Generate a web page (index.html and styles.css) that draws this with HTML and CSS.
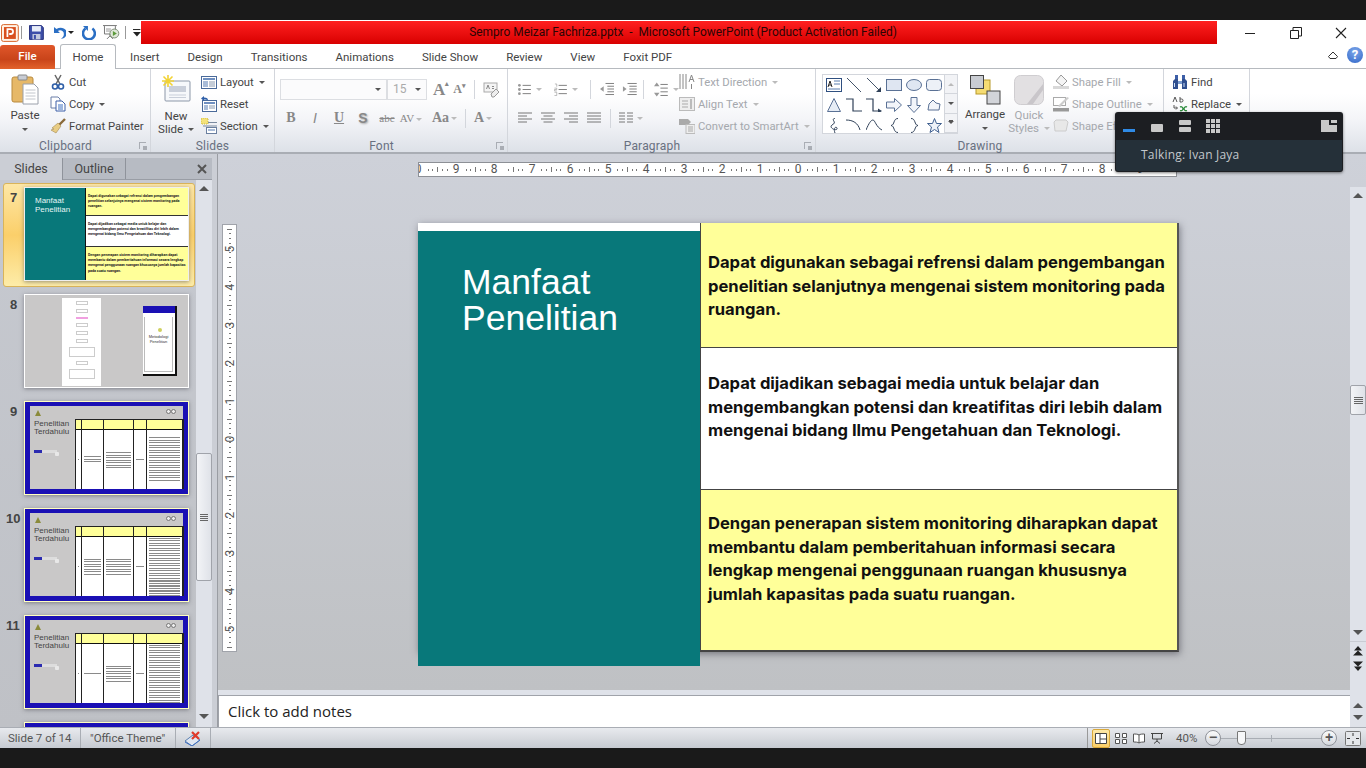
FILE: index.html
```html
<!DOCTYPE html>
<html lang="id">
<head>
  <meta charset="UTF-8">
  <title>Sempro Meizar Fachriza.pptx - Microsoft PowerPoint</title>
  <link rel="stylesheet" href="styles.css">
</head>
<body>
<div class="screen">
  <div class="black-top"></div>

  <!-- title bar -->
  <div class="titlebar">
    <div class="qat">
      <svg class="q-logo" width="18" height="18" viewBox="0 0 18 18"><rect x=".5" y=".5" width="17" height="17" rx="2" fill="#fff3e6" stroke="#d9652b"/><rect x="3" y="3" width="12" height="12" fill="#d9501e"/><path d="M6.5 13V5h3.2a2.4 2.4 0 0 1 0 5H8.3" fill="none" stroke="#fff" stroke-width="1.8"/></svg>
      <span class="q-sep q1"></span>
      <svg class="q-save" width="15" height="15" viewBox="0 0 15 15"><path d="M.5.5h12l2 2v12H.5z" fill="#3d4fa8" stroke="#2a3580"/><rect x="3" y="1" width="9" height="5.500" fill="#e8edf8"/><rect x="3.500" y="9" width="8" height="5.500" fill="#c3c9dc"/><rect x="5" y="10" width="2" height="4" fill="#3d4fa8"/></svg>
      <svg class="q-undo" width="14" height="14" viewBox="0 0 14 14"><path d="M1 1v6h6L5 5c2-1.500 6-.5 6 3 0 2-1 3.500-3 5 4-.5 6-3 6-6C14 2.500 8 0 3.500 3z" fill="#2b6fc4"/></svg>
      <span class="caret dark q-c1"></span>
      <svg class="q-redo" width="14" height="14" viewBox="0 0 14 14"><path d="M3.500 2.500A6 6 0 1 0 10.500 2.500" fill="none" stroke="#2b6fc4" stroke-width="2.600"/><path d="M1 0h5v5z" fill="#2b6fc4"/></svg>
      <svg class="q-show" width="17" height="15" viewBox="0 0 17 15"><path d="M0 .5h14M1.500 1v8h11V1M7 9v2M4 14l3-3 3 3" fill="none" stroke="#777"/><path d="M3 4h5M3 6h5" stroke="#999"/><circle cx="11.500" cy="8.500" r="4.500" fill="#dfe8d8" stroke="#7f8f78"/><path d="M10 6v5l4-2.500z" fill="#5b9a3a"/></svg>
      <span class="q-sep q2"></span>
      <svg class="q-more" width="8" height="8" viewBox="0 0 8 8"><path d="M0 .5h7.500" stroke="#222"/><path d="M0 3h8L4 7.500z" fill="#222"/></svg>
    </div>
    <div class="title-red">Sempro Meizar Fachriza.pptx&nbsp; -&nbsp; Microsoft PowerPoint (Product Activation Failed)</div>
    <div class="winbtns">
      <svg width="12" height="12" viewBox="0 0 12 12"><path d="M1 6.500h10" stroke="#222"/></svg>
      <svg width="12" height="12" viewBox="0 0 12 12"><path d="M.5 3.500h8v8h-8zM3 3.500V.5h8.500V9H8.500" fill="none" stroke="#222"/></svg>
      <svg width="12" height="12" viewBox="0 0 12 12"><path d="M1 1l10 10M11 1L1 11" stroke="#222" stroke-width="1.100"/></svg>
    </div>
  </div>

  <!-- tabs -->
  <div class="tabs">
    <div class="tab-file">File</div>
    <div class="tab-home">Home</div>
    <div class="tab">Insert</div>
    <div class="tab">Design</div>
    <div class="tab">Transitions</div>
    <div class="tab">Animations</div>
    <div class="tab">Slide Show</div>
    <div class="tab">Review</div>
    <div class="tab">View</div>
    <div class="tab">Foxit PDF</div>
    <div class="tabs-right">
      <svg width="10" height="8" viewBox="0 0 10 8"><path d="M.5 5.500L5 1l4.500 4.500-1.500 2H2z" fill="none" stroke="#333"/></svg>
      <div class="help">?</div>
    </div>
  </div>

  <!-- ribbon -->
  <div class="ribbon">
    <div class="group g-clip">
      <div class="g-body">
        <div class="big-btn paste">
          <svg width="28" height="31" viewBox="0 0 28 31"><rect x="1" y="3" width="21" height="25" rx="2" fill="#e6b868" stroke="#b98a3e"/><rect x="7" y="1" width="9" height="5" rx="1" fill="#c8ccd4" stroke="#888"/><path d="M12 10h11l4 4v16H12z" fill="#fff" stroke="#9aa0aa"/><path d="M14.500 16h10M14.500 19h10M14.500 22h10M14.500 25h10" stroke="#c2c6cc"/></svg>
          <span class="big-label">Paste</span>
          <span class="caret"></span>
        </div>
        <div class="stack">
          <div class="row"><svg class="ic" width="16" height="16" viewBox="0 0 16 16"><path d="M5 1l5 9M11 1L6 10" stroke="#666" stroke-width="1.500"/><circle cx="5" cy="12.500" r="2.500" fill="none" stroke="#2f5fa8" stroke-width="1.600"/><circle cx="11" cy="12.500" r="2.500" fill="none" stroke="#2f5fa8" stroke-width="1.600"/></svg>Cut</div>
          <div class="row"><svg class="ic" width="16" height="16" viewBox="0 0 16 16"><path d="M1 1h7l2 2v9H1z" fill="#fff" stroke="#6b7fa8"/><path d="M6 5h6l3 3v7H6z" fill="#fff" stroke="#3d5fa8"/><path d="M8 9h5M8 11h5M8 13h5" stroke="#3d6fc0"/></svg>Copy <span class="caret"></span></div>
          <div class="row"><svg class="ic" width="16" height="16" viewBox="0 0 16 16"><path d="M15 1L8 8" stroke="#8a6a3a" stroke-width="2.400"/><path d="M8 5l3 3-5 7-5-3 3-1-2-1z" fill="#e8cc84" stroke="#a58a50" stroke-width=".6"/></svg>Format Painter</div>
        </div>
      </div>
      <div class="g-label">Clipboard<span class="launcher"></span></div>
    </div>

    <div class="group g-slides">
      <div class="g-body">
        <div class="big-btn newslide">
          <svg width="30" height="28" viewBox="0 0 30 28"><rect x="4" y="6" width="25" height="20" rx="1" fill="#f6f8fb" stroke="#8c97a8"/><rect x="8" y="11" width="17" height="6" fill="#c9cfda"/><path d="M8 20h17M8 22.500h17" stroke="#c9cfda"/><path d="M7 0v12M1 6h12M2.500 1.500l9 9M11.500 1.500l-9 9" stroke="#f2d335" stroke-width="1.600"/></svg>
          <span class="big-label">New<br>Slide <span class="caret"></span></span>
        </div>
        <div class="stack">
          <div class="row"><svg class="ic" width="16" height="16" viewBox="0 0 16 16"><rect x=".5" y="2.500" width="15" height="12" fill="#fff" stroke="#4a6a9a"/><rect x="2" y="4" width="12" height="2" fill="#6f8fc0"/><rect x="2" y="7" width="5" height="6" fill="#a9bcd8"/><path d="M8 8h6M8 10h6M8 12h6" stroke="#8a9ab0"/></svg>Layout <span class="caret"></span></div>
          <div class="row"><svg class="ic" width="16" height="16" viewBox="0 0 16 16"><rect x="1.500" y="4.500" width="14" height="11" fill="#fff" stroke="#4a6a9a"/><rect x="3" y="6" width="11" height="2" fill="#6f8fc0"/><rect x="3" y="9" width="4" height="5" fill="#a9bcd8"/><path d="M8 10h6M8 12h6" stroke="#8a9ab0"/><path d="M0 2.500L3 0v1.500c3 0 4 1 4 3C6 3.500 5 3.500 3 3.500V5z" fill="#2f5fa8"/></svg>Reset</div>
          <div class="row"><svg class="ic" width="16" height="16" viewBox="0 0 16 16"><rect x="0" y="0" width="7" height="6" fill="#f4e27a" stroke="#c9b63e" stroke-dasharray="1 1"/><path d="M7 4.500h9M2 8h14" stroke="#7a8aa0"/><rect x="5.500" y="9.500" width="10" height="6" fill="#fff" stroke="#6a7f9f"/><rect x="7" y="11" width="7" height="2" fill="#a9bcd8"/></svg>Section <span class="caret"></span></div>
        </div>
      </div>
      <div class="g-label">Slides</div>
    </div>

    <div class="group g-font off">
      <div class="g-body col">
        <div class="f-row1">
          <div class="select s-font"><span class="caret"></span></div>
          <div class="select s-size">15<span class="caret"></span></div>
          <span class="glyph big a-grow">A<i>▴</i></span>
          <span class="glyph a-shrink">A<i>▾</i></span>
          <span class="vsep s1"></span>
          <svg class="clear" width="17" height="16" viewBox="0 0 17 16"><rect x="1" y="1" width="13" height="9" fill="#f4f4f4" stroke="#aaa"/><path d="M3.500 7L5 3l1.500 4M9 4.500h2M9 6.500h2" fill="none" stroke="#888"/><path d="M8 12l5-5 3 3-5 5H9z" fill="#eee" stroke="#999"/></svg>
        </div>
        <div class="f-row2">
          <b class="glyph serif">B</b>
          <i class="glyph serif">I</i>
          <u class="glyph serif">U</u>
          <b class="glyph shadowed">S</b>
          <s class="glyph small">abc</s>
          <span class="glyph small av">AV<span class="caret light"></span></span>
          <span class="glyph serif aa">Aa<span class="caret light"></span></span>
          <span class="vsep s2"></span>
          <b class="glyph serif color">A<span class="caret light"></span></b>
        </div>
      </div>
      <div class="g-label">Font<span class="launcher"></span></div>
    </div>

    <div class="group g-para off">
      <div class="g-body">
        <div class="para-left">
          <div class="p-row1">
            <svg width="14" height="13" viewBox="0 0 14 13"><path d="M5 2h9M5 6.500h9M5 11h9" stroke="#777"/><circle cx="1.500" cy="2" r="1.500" fill="#999"/><circle cx="1.500" cy="6.500" r="1.500" fill="#999"/><circle cx="1.500" cy="11" r="1.500" fill="#999"/></svg>
            <span class="caret light"></span>
            <svg class="gap1" width="14" height="13" viewBox="0 0 14 13"><path d="M5 2h9M5 6.500h9M5 11h9" stroke="#777"/><path d="M1 .5h2v3M.5 5h2.500v1.500H.5V8H3M.5 9.500H3V13H.5" fill="none" stroke="#999" stroke-width=".7"/></svg>
            <span class="caret light"></span>
            <span class="vsep v3"></span>
            <svg width="16" height="14" viewBox="0 0 16 14"><path d="M6 1h10M8 4h8M8 7h8M8 10h8M6 13h10" stroke="#777"/><path d="M0 7l4-3v6z" fill="#999"/></svg>
            <svg class="gap2" width="16" height="14" viewBox="0 0 16 14"><path d="M6 1h10M8 4h8M8 7h8M8 10h8M6 13h10" stroke="#777"/><path d="M5 7L1 4v6z" fill="#999"/></svg>
            <span class="vsep v4"></span>
            <svg width="15" height="15" viewBox="0 0 15 15"><path d="M7 2h8M7 6h8M7 10h8M7 14h8" stroke="#777"/><path d="M3 0l3 4H0zM3 15l3-4H0z" fill="#999"/></svg>
            <span class="caret light"></span>
          </div>
          <div class="p-row2">
            <svg width="14" height="12" viewBox="0 0 14 12"><path d="M0 1h14M0 4h9M0 7h14M0 10h9" stroke="#777"/></svg>
            <svg width="14" height="12" viewBox="0 0 14 12"><path d="M0 1h14M2.500 4h9M0 7h14M2.500 10h9" stroke="#777"/></svg>
            <svg width="14" height="12" viewBox="0 0 14 12"><path d="M0 1h14M5 4h9M0 7h14M5 10h9" stroke="#777"/></svg>
            <svg width="14" height="12" viewBox="0 0 14 12"><path d="M0 1h14M0 4h14M0 7h14M0 10h14" stroke="#777"/></svg>
            <span class="vsep v5"></span>
            <svg width="14" height="12" viewBox="0 0 14 12"><path d="M0 1h6M0 4h6M0 7h6M0 10h6M8 1h6M8 4h6M8 7h6M8 10h6" stroke="#777"/></svg>
            <span class="caret light"></span>
          </div>
        </div>
        <div class="stack disabled">
          <div class="row"><svg class="ic" width="16" height="16" viewBox="0 0 16 16"><path d="M1 0v15M4 0v15M7 0v15" stroke="#888"/><path d="M10 8l2.500-7L15 8M11 5.500h3M12.500 10v5" fill="none" stroke="#888"/></svg>Text Direction <span class="caret light"></span></div>
          <div class="row"><svg class="ic" width="16" height="16" viewBox="0 0 16 16"><rect x=".5" y="1.500" width="15" height="13" fill="#eee" stroke="#bbb"/><path d="M3 5h6M3 8h6M3 11h6" stroke="#aaa"/><path d="M12 3v10" stroke="#888"/></svg>Align Text <span class="caret light"></span></div>
          <div class="row"><svg class="ic" width="16" height="16" viewBox="0 0 16 16"><path d="M0 1h9l3 3-3 3H0z" fill="#aaa"/><rect x="7" y="6.500" width="9" height="9" fill="#eee" stroke="#bbb"/><path d="M9 9h5M9 11h5M9 13h5" stroke="#aaa"/></svg>Convert to SmartArt <span class="caret light"></span></div>
        </div>
      </div>
      <div class="g-label">Paragraph<span class="launcher"></span></div>
    </div>

    <div class="group g-draw">
      <div class="g-body">
        <div class="gallery">
          <div class="shapes">
            <svg width="16" height="14" viewBox="0 0 16 14"><rect x=".5" y=".5" width="15" height="13" fill="#fff" stroke="#2f4f80"/><path d="M2 9l2-6 2 6M3 7h2" fill="none" stroke="#222"/><path d="M8 3h6M8 6h6M2 11h12" stroke="#5a7fb0"/></svg>
            <svg width="16" height="14" viewBox="0 0 16 14"><path d="M1 0l14 14" stroke="#44546a"/></svg>
            <svg width="16" height="14" viewBox="0 0 16 14"><path d="M1 0l12 12" stroke="#44546a"/><path d="M15 14h-5l5-5z" fill="#2f4058"/></svg>
            <svg width="16" height="12" viewBox="0 0 16 12"><rect x=".5" y=".5" width="15" height="11" fill="#dfe6f2" stroke="#5a7195"/></svg>
            <svg width="16" height="12" viewBox="0 0 16 12"><ellipse cx="8" cy="6" rx="7.500" ry="5.500" fill="#dfe6f2" stroke="#5a7195"/></svg>
            <svg width="16" height="12" viewBox="0 0 16 12"><rect x=".5" y=".5" width="15" height="11" rx="3" fill="#edf1f7" stroke="#5a7195"/></svg>
            <svg width="14" height="14" viewBox="0 0 14 14"><path d="M7 .5l6.500 13H.5z" fill="#e6ecf5" stroke="#5a7195"/></svg>
            <svg width="16" height="14" viewBox="0 0 16 14"><path d="M0 1h7v12h9" fill="none" stroke="#2f4058" stroke-width="1.200"/></svg>
            <svg width="16" height="14" viewBox="0 0 16 14"><path d="M0 1h7v12h6" fill="none" stroke="#2f4058" stroke-width="1.200"/><path d="M16 13l-4-2.500v5z" fill="#2f4058"/></svg>
            <svg width="16" height="14" viewBox="0 0 16 14"><path d="M.5 4h8V.5L15.500 7l-7 6.500V10h-8z" fill="#f2f5fa" stroke="#5a7195"/></svg>
            <svg width="14" height="16" viewBox="0 0 14 16"><path d="M4 .5h6v8h3.500L7 15.500.5 8.500H4z" fill="#f2f5fa" stroke="#5a7195"/></svg>
            <svg width="14" height="12" viewBox="0 0 14 12"><path d="M1 11l1-6 4-4 3 3 4 1-1 6z" fill="#f2f5fa" stroke="#5a7195"/></svg>
            <svg width="10" height="15" viewBox="0 0 10 15"><path d="M6 0C1 2 9 4 3 7c-4 3 6 7 5 3-1-2-4 0-2 5" fill="none" stroke="#2f4058"/></svg>
            <svg width="16" height="12" viewBox="0 0 16 12"><path d="M0 1c7 0 12 3 14 10" fill="none" stroke="#2f4058"/></svg>
            <svg width="16" height="12" viewBox="0 0 16 12"><path d="M0 11C3 4 5 1 7 1s3 7 9 10" fill="none" stroke="#2f4058"/></svg>
            <svg width="9" height="15" viewBox="0 0 9 15"><path d="M8 .5C3 .5 5 7 1 7.500c4 .5 2 7 7 7" fill="none" stroke="#2f4058"/></svg>
            <svg width="9" height="15" viewBox="0 0 9 15"><path d="M1 .5c5 0 3 6.500 7 7-4 .5-2 7-7 7" fill="none" stroke="#2f4058"/></svg>
            <svg width="15" height="15" viewBox="0 0 15 15"><path d="M7.500.5l2 5h5l-4 3.500 1.500 5.500-4.500-3-4.500 3L4.500 9l-4-3.500h5z" fill="#eef2f8" stroke="#3f5f8f"/></svg>
          </div>
          <div class="gal-scroll">
            <span class="gs"><i class="tri up"></i></span>
            <span class="gs"><i class="tri"></i></span>
            <span class="gs"><i class="tri bar"></i></span>
          </div>
        </div>
        <div class="big-btn arrange">
          <svg width="31" height="30" viewBox="0 0 31 30"><rect x="6" y="5" width="14" height="14" fill="#f5dc72" stroke="#b89a2a"/><rect x=".5" y=".5" width="13" height="13" fill="#c9ccd2" stroke="#444"/><rect x="17" y="16" width="13" height="13" fill="#d2d4d9" stroke="#444"/></svg>
          <span class="big-label">Arrange</span>
          <span class="caret"></span>
        </div>
        <div class="big-btn quick">
          <svg width="30" height="30" viewBox="0 0 30 30"><rect x=".5" y=".5" width="29" height="29" rx="6" fill="#e2e0e2" stroke="#cfcdd0"/><path d="M29 9L17 24l-4 5h6l10-14z" fill="#c9c6ca"/></svg>
          <span class="big-label">Quick<br>Styles <span class="caret light"></span></span>
        </div>
        <div class="stack disabled shape-stack">
          <div class="row"><svg class="ic" width="16" height="16" viewBox="0 0 16 16"><path d="M3 7l5-6 6 6-5 5z" fill="#f4f4f4" stroke="#999"/><rect y="12" width="16" height="3" fill="#d8d8d8"/></svg>Shape Fill <span class="caret light"></span></div>
          <div class="row"><svg class="ic" width="16" height="16" viewBox="0 0 16 16"><rect x=".5" y="1.500" width="12" height="8" fill="#fff" stroke="#aaa"/><path d="M5 10L14 1l2 1-9 9z" fill="#ccc"/><rect y="12" width="16" height="3.500" fill="#999"/></svg>Shape Outline <span class="caret light"></span></div>
          <div class="row"><svg class="ic" width="16" height="16" viewBox="0 0 16 16"><path d="M3 2h10l2 2-2 9H2L1 4z" fill="#e8e8e8" stroke="#ccc"/></svg>Shape Effects <span class="caret light"></span></div>
        </div>
      </div>
      <div class="g-label">Drawing</div>
    </div>

    <div class="group g-edit">
      <div class="g-body">
        <div class="stack">
          <div class="row"><svg class="ic" width="16" height="16" viewBox="0 0 16 16"><path d="M3 1h3v5H3zM10 1h3v5h-3z" fill="#3d5fa8"/><path d="M1 15V7l2-2h3v10zM15 15V7l-2-2h-3v10z" fill="#2f4f90"/><path d="M6 7h4v3H6z" fill="#7f9fd0"/><path d="M2.500 9v4M12 9v4" stroke="#cfe0f5"/></svg>Find</div>
          <div class="row"><svg class="ic" width="16" height="16" viewBox="0 0 16 16"><path d="M1 6l2-5 2 5M8 1v5h1.500a1.500 1.500 0 0 0 0-3H8" fill="none" stroke="#555"/><path d="M2 9v3h3M4 10.500L5.500 12 4 13.500" fill="none" stroke="#555"/><path d="M8 11a2 2 0 1 1 0 3.500M15 11a2 2 0 1 0 0 3.500" fill="none" stroke="#2a8a3a" stroke-width="1.300"/></svg>Replace <span class="caret"></span></div>
        </div>
      </div>
    </div>
  </div>

  <!-- voice overlay -->
  <div class="voice">
    <div class="voice-top">
      <span class="v-min"></span>
      <span class="v-one"></span>
      <span class="v-two"><i></i><i></i></span>
      <span class="v-grid"><i></i><i></i><i></i><i></i><i></i><i></i><i></i><i></i><i></i></span>
      <svg class="v-pip" width="16" height="12" viewBox="0 0 16 12"><path d="M0 0h8v5h8v7H0zM10 0h6v3h-6z" fill="#c8c8c8"/></svg>
    </div>
    <div class="voice-bottom">Talking: Ivan Jaya</div>
  </div>

  <!-- work area -->
  <div class="workspace">
    <div class="left-pane">
      <div class="pane-tabs">
        <div class="pane-tab active">Slides</div>
        <div class="pane-tab">Outline</div>
        <svg class="pane-x" width="10" height="10" viewBox="0 0 10 10"><path d="M1 1l8 8M9 1L1 9" stroke="#555" stroke-width="2"/></svg>
      </div>
      <div class="pane-body">
        <div class="thumbs">
          <div class="t-row sel">
            <span class="t-num">7</span>
            <div class="thumb th7">
              <div class="th7-left">Manfaat<br>Penelitian</div>
              <div class="th7-right">
                <p class="c1">Dapat digunakan sebagai refrensi dalam pengembangan penelitian selanjutnya mengenai sistem monitoring pada ruangan.</p>
                <p class="c2">Dapat dijadikan sebagai media untuk belajar dan mengembangkan potensi dan kreatifitas diri lebih dalam mengenai bidang Ilmu Pengetahuan dan Teknologi.</p>
                <p class="c3">Dengan penerapan sistem monitoring diharapkan dapat membantu dalam pemberitahuan informasi secara lengkap mengenai penggunaan ruangan khususnya jumlah kapasitas pada suatu ruangan.</p>
              </div>
            </div>
          </div>
          <div class="t-row">
            <span class="t-num">8</span>
            <div class="thumb th8">
              <div class="flow">
                <i></i><i></i><i class="pink"></i><i></i><i></i><i></i><i class="wide"></i><i></i><i class="wide"></i>
              </div>
              <div class="mini-slide">
                <div class="mini-head"></div>
                <div class="mini-body"><span class="bulb"></span>Metodologi<br>Penelitian</div>
              </div>
            </div>
          </div>
          <div class="t-row">
            <span class="t-num">9</span>
            <div class="thumb th-table">
              <div class="th-inner">
                <div class="th-side">
                  <div class="th-icons"><span class="warn"></span><span class="dots"><i></i><i></i></span></div>
                  <div class="th-title">Penelitian<br>Terdahulu</div>
                  <div class="th-prog"></div>
                </div>
                <div class="mini-table">
                  <div class="mc w1"><b></b><span class="one"></span></div>
                  <div class="mc w2"><b></b><span class="short"></span></div>
                  <div class="mc w3"><b></b><span class="mid"></span></div>
                  <div class="mc w4"><b></b><span class="one"></span></div>
                  <div class="mc w5"><b></b><span class="long"></span></div>
                </div>
              </div>
            </div>
          </div>
          <div class="t-row">
            <span class="t-num n2">10</span>
            <div class="thumb th-table">
              <div class="th-inner">
                <div class="th-side">
                  <div class="th-icons"><span class="warn"></span><span class="dots"><i></i><i></i></span></div>
                  <div class="th-title">Penelitian<br>Terdahulu</div>
                  <div class="th-prog"></div>
                </div>
                <div class="mini-table">
                  <div class="mc w1"><b></b><span class="one"></span></div>
                  <div class="mc w2"><b></b><span class="mid"></span></div>
                  <div class="mc w3"><b></b><span class="mid"></span></div>
                  <div class="mc w4"><b></b><span class="one"></span></div>
                  <div class="mc w5"><b></b><span class="full"></span></div>
                </div>
              </div>
            </div>
          </div>
          <div class="t-row">
            <span class="t-num n2">11</span>
            <div class="thumb th-table">
              <div class="th-inner">
                <div class="th-side">
                  <div class="th-icons"><span class="warn"></span><span class="dots"><i></i><i></i></span></div>
                  <div class="th-title">Penelitian<br>Terdahulu</div>
                  <div class="th-prog"></div>
                </div>
                <div class="mini-table">
                  <div class="mc w1"><b></b><span class="one"></span></div>
                  <div class="mc w2"><b></b><span class="one"></span></div>
                  <div class="mc w3"><b></b><span class="mid"></span></div>
                  <div class="mc w4"><b></b><span class="one"></span></div>
                  <div class="mc w5"><b></b><span class="full"></span></div>
                </div>
              </div>
            </div>
          </div>
          <div class="t-row">
            <span class="t-num n2"></span>
            <div class="thumb th-table"></div>
          </div>
        </div>
        <div class="sb thumbs-sb">
          <i class="tri up"></i>
          <div class="sb-thumb tall"><span class="grip"></span></div>
          <i class="tri"></i>
        </div>
      </div>
    </div>

    <div class="right-side">
      <div class="canvas-row">
        <div class="canvas">
          <div class="ruler-h">
            <span>0</span><span>9</span><span>8</span><span>7</span><span>6</span><span>5</span><span>4</span><span>3</span><span>2</span><span>1</span><span>0</span><span>1</span><span>2</span><span>3</span><span>4</span><span>5</span><span>6</span><span>7</span><span>8</span><span>9</span>
          </div>
          <div class="stage">
            <div class="ruler-v">
              <span>5</span><span>4</span><span>3</span><span>2</span><span>1</span><span>0</span><span>1</span><span>2</span><span>3</span><span>4</span><span>5</span>
            </div>
            <div class="slide">
              <div class="slide-left">
                <div class="teal"><h1>Manfaat<br>Penelitian</h1></div>
              </div>
              <div class="slide-right">
                <div class="cell yellow c-a">Dapat digunakan sebagai refrensi dalam pengembangan penelitian selanjutnya mengenai sistem monitoring pada ruangan.</div>
                <div class="cell white c-b">Dapat dijadikan sebagai media untuk belajar dan mengembangkan potensi dan kreatifitas diri lebih dalam mengenai bidang Ilmu Pengetahuan dan Teknologi.</div>
                <div class="cell yellow c-c">Dengan penerapan sistem monitoring diharapkan dapat membantu dalam pemberitahuan informasi secara lengkap mengenai penggunaan ruangan khususnya jumlah kapasitas pada suatu ruangan.</div>
              </div>
            </div>
          </div>
        </div>
        <div class="sb main-sb">
          <i class="tri up"></i>
          <div class="sb-thumb short"><span class="grip"></span></div>
          <i class="tri"></i>
          <div class="pager">
            <svg width="10" height="10" viewBox="0 0 10 10"><path d="M5 0l4 4.500H1zM5 4.500l5 5H0z" fill="#222"/></svg>
            <svg width="10" height="10" viewBox="0 0 10 10"><path d="M0 .5h10l-5 5zM1 5.500h8L5 10z" fill="#222"/></svg>
          </div>
        </div>
      </div>
      <div class="notes-row">
        <div class="notes">Click to add notes</div>
        <div class="sb notes-sb"><i class="tri up"></i><i class="tri"></i></div>
      </div>
    </div>
  </div>

  <!-- status bar -->
  <div class="statusbar">
    <span class="st st1">Slide 7 of 14</span>
    <span class="st st2">"Office Theme"</span>
    <span class="st st3"><svg width="17" height="15" viewBox="0 0 17 15"><path d="M1 10l8-6 7 5-8 6z" fill="#dfe6f2" stroke="#5a7fb0"/><path d="M1 11l7 4 8-6" fill="none" stroke="#3f6fc0"/><path d="M8 1l7 7M15 1L8 8" stroke="#e0392a" stroke-width="2.200"/></svg></span>
    <div class="st-right">
      <span class="view-on"><svg width="12" height="11" viewBox="0 0 12 11"><path d="M.5.5h11v10H.5zM5 .5v10M5 6h6.500" fill="#fff" stroke="#444"/></svg></span>
      <svg class="vw1" width="12" height="11" viewBox="0 0 12 11"><path d="M.5.5h4v4h-4zM7.500.5h4v4h-4zM.5 6.500h4v4h-4zM7.500 6.500h4v4h-4z" fill="#fff" stroke="#555"/></svg>
      <svg class="vw2" width="12" height="11" viewBox="0 0 12 11"><path d="M6 2C5 1 2 1 .5 1v8C2 9 5 9 6 10c1-1 4-1 5.500-1V1C10 1 7 1 6 2zM6 2v8" fill="#fff" stroke="#555"/></svg>
      <svg class="vw3" width="12" height="11" viewBox="0 0 12 11"><path d="M0 .5h12M1.500 1v5h9V1M6 6v2M3 10.500L6 8l3 2.500" fill="none" stroke="#444"/></svg>
      <span class="zoom-pct">40%</span>
      <span class="round">−</span>
      <div class="slider"><i class="mid-tick"></i><i class="knob"></i></div>
      <span class="round">+</span>
      <svg class="fit" width="16" height="15" viewBox="0 0 16 15"><rect x=".5" y=".5" width="15" height="14" rx="1" fill="#e5e7ea" stroke="#777"/><path d="M8 2v3M8 10v3M2 7.500h3M11 7.500h3" stroke="#333"/></svg>
    </div>
  </div>
  <div class="black-bottom"></div>
</div>
</body>
</html>
```

FILE: styles.css
```css
* {
  box-sizing: border-box;
}

body {
  margin: 0;
  background: #1a1a1a;
  font-family: Roboto, "Noto Sans", sans-serif;
  font-size: 11px;
  color: #444;
}

.screen {
  position: relative;
  width: 1366px;
  height: 768px;
  overflow: hidden;
  background: #1a1a1a;
}

.black-top {
  height: 20px;
}

.black-bottom {
  height: 20px;
}

/* title bar */
.titlebar {
  display: flex;
  height: 24px;
  background: #fff;
  padding-top: 1px;
}

.qat {
  display: flex;
  align-items: center;
  width: 141px;
  flex: none;
  padding-left: 1px;
}

.q-sep {
  width: 1px;
  height: 13px;
  background: #999;
}

.q1 { margin-left: 2px; }
.q-save { margin-left: 7px; }
.q-undo { margin-left: 9px; }
.q-c1 { margin-left: 4px; margin-right: 0; }
.q-redo { margin-left: 8px; }
.q-show { margin-left: 7px; }
.q2 { margin-left: 5px; }
.q-more { margin-left: 7px; }

.title-red {
  width: 1076px;
  background: linear-gradient(#ff2020, #d80000);
  color: #2a0505;
  font-size: 11.900px;
  line-height: 23px;
  text-align: center;
  padding-left: 8px;
  white-space: nowrap;
}

.winbtns {
  flex: 1;
  display: flex;
  justify-content: space-between;
  align-items: center;
  padding: 0 19px 0 27px;
}

/* tabs */
.tabs {
  display: flex;
  height: 25px;
  background: #fff;
  border-bottom: 1px solid #b6babf;
  font-size: 11.500px;
  color: #444;
}

.tab-file {
  width: 55px;
  height: 24px;
  margin-top: 1px;
  background: linear-gradient(#e0572a, #c9441a 60%, #e2622c);
  border-radius: 3px 3px 0 0;
  color: #fff;
  font-weight: 500;
  text-align: center;
  line-height: 23px;
}

.tab-home {
  width: 56px;
  height: 25px;
  margin-left: 5px;
  padding-top: 5px;
  text-align: center;
  background: #fff;
  border: 1px solid #b6babf;
  border-bottom: 0;
  border-radius: 3px 3px 0 0;
  z-index: 1;
}

.tab {
  padding: 6px 14px 0;
}

.tabs-right {
  margin-left: auto;
  display: flex;
  align-items: center;
  gap: 9px;
  padding: 0 3px 2px 0;
}

.help {
  width: 16px;
  height: 16px;
  border-radius: 50%;
  background: radial-gradient(circle at 50% 30%, #7fa8ea, #2f66c8);
  color: #fff;
  font-weight: 700;
  font-size: 13px;
  line-height: 16px;
  text-align: center;
}

/* ribbon */
.ribbon {
  display: flex;
  height: 85px;
  background: linear-gradient(#fff 30%, #f4f5f8 60%, #dde1e8);
  border-bottom: 2px solid #a9adb4;
}

.group {
  display: flex;
  flex-direction: column;
  border-right: 1px solid #d3d6dc;
  flex: none;
}

.g-clip { width: 151px; }
.g-slides { width: 124px; }
.g-font { width: 233px; }
.g-para { width: 308px; }
.g-draw { width: 348px; }
.g-edit { width: 86px; border-right: 1px solid #d3d6dc; }

.g-body {
  flex: 1;
  display: flex;
  min-height: 0;
}

.g-body.col {
  flex-direction: column;
}

.g-label {
  position: relative;
  height: 14px;
  line-height: 16px;
  text-align: center;
  color: #687080;
  font-size: 12px;
  letter-spacing: .2px;
}

.g-clip .g-label,
.g-font .g-label,
.g-para .g-label,
.g-draw .g-label {
  padding-right: 19px;
}

.launcher {
  position: absolute;
  right: 4px;
  top: 4px;
  width: 7px;
  height: 7px;
  border: 1px solid #a9adb4;
  border-width: 1px 0 0 1px;
}

.launcher::after {
  content: "";
  position: absolute;
  right: -1px;
  bottom: -1px;
  width: 4px;
  height: 4px;
  background: #a9adb4;
}

.big-btn {
  display: flex;
  flex-direction: column;
  align-items: center;
  flex: none;
  text-align: center;
}

.big-btn svg {
  flex: none;
}

.big-label {
  line-height: 13px;
  font-size: 11.500px;
}

.caret {
  display: inline-block;
  width: 0;
  height: 0;
  margin-left: 2px;
  vertical-align: middle;
  border: 3px solid transparent;
  border-top: 3px solid #555;
  border-bottom: 0;
}

.caret.dark { border-top-color: #222; }
.caret.light { border-top-color: #bbb; }

.paste {
  width: 50px;
  padding-top: 5px;
}

.paste .big-label { margin-top: 4px; }
.paste .caret { margin: 6px 0 0; }

.newslide {
  width: 50px;
  padding-top: 6px;
}

.newslide .big-label { margin-top: 7px; }

.stack {
  display: flex;
  flex-direction: column;
  padding-top: 2px;
}

.row {
  display: flex;
  align-items: center;
  height: 22px;
  white-space: nowrap;
  font-size: 11.300px;
  gap: 0;
}

.row .caret {
  margin-left: 5px;
}

.ic {
  flex: none;
  margin-right: 3px;
}

.disabled .row {
  color: #a5a8ad;
}

.off { color: #aaa; }

/* font group */
.f-row1 {
  position: relative;
  display: flex;
  align-items: center;
  height: 21px;
  margin: 10px 0 0 5px;
}

.select {
  position: relative;
  height: 21px;
  background: #fbfbfc;
  border: 1px solid #dcdee2;
  color: #aaa;
  padding: 2px 5px;
  font-size: 12px;
}

.select .caret {
  position: absolute;
  right: 5px;
  top: 8px;
}

.s-font { width: 107px; }
.s-size { width: 40px; margin-left: 0; }

.glyph {
  font-family: "Liberation Serif", serif;
  color: #888;
  font-size: 14px;
  font-style: normal;
  display: inline-block;
  text-align: center;
}

.big { font-size: 17px; font-weight: 700; margin-left: 6px; }
.a-grow i, .a-shrink i { font-size: 7px; font-style: normal; vertical-align: top; }
.a-shrink { font-size: 12px; font-weight: 700; margin-left: 4px; }
.vsep { width: 1px; background: #d3d6dc; flex: none; }
.s1 { height: 19px; margin-left: 8px; }
.clear { margin-left: 8px; }

.f-row2 {
  display: flex;
  align-items: center;
  height: 22px;
  margin: 7px 0 0 4px;
}

.f-row2 .glyph { width: 24px; }
.serif { font-size: 14px; font-weight: 700; }
.f-row2 i.serif { font-style: italic; font-weight: 400; font-family: "Liberation Sans", sans-serif; }
.f-row2 u.serif { text-decoration: underline; font-weight: 700; }
.shadowed { font-family: "Liberation Sans", sans-serif; text-shadow: 1px 1px 2px #aaa; }
.small { font-size: 11px; }
.av { white-space: nowrap; }
.f-row2 .aa { width: 31px; margin-left: 6px; white-space: nowrap; }
.s2 { height: 19px; margin-left: 5px; }
.f-row2 .color { width: 30px; margin-left: 2px; }

/* paragraph group */
.para-left {
  width: 171px;
  flex: none;
  padding: 9px 0 0 10px;
}

.p-row1, .p-row2 {
  display: flex;
  align-items: center;
  height: 22px;
}

.p-row2 {
  margin-top: 7px;
  padding-left: 0;
  gap: 9px;
}

.p-row1 .caret { margin-left: 5px; }
.gap1 { margin-left: 12px; }
.v3 { height: 19px; margin: 0 9px 0 12px; }
.gap2 { margin-left: 8px; }
.v4 { height: 19px; margin: 0 10px 0 6px; }
.v5 { height: 19px; margin: 0 -1px 0 0; }
.p-row2 .caret { margin-left: -5px; }

/* drawing group */
.gallery {
  display: flex;
  width: 136px;
  height: 60px;
  margin: 5px 0 0 6px;
  background: #fff;
  border: 1px solid #d3d6dc;
  flex: none;
}

.shapes {
  flex: 1;
  display: grid;
  grid-template-columns: repeat(6, 20px);
  grid-template-rows: repeat(3, 20px);
  place-items: center;
  padding-left: 1px;
}

.gal-scroll {
  width: 14px;
  display: flex;
  flex-direction: column;
  border-left: 1px solid #d3d6dc;
  background: #f2f3f6;
}

.gs {
  flex: 1;
  display: flex;
  align-items: center;
  justify-content: center;
  border-bottom: 1px solid #d3d6dc;
}

.tri {
  display: block;
  width: 0;
  height: 0;
  border: 5px solid transparent;
  border-top: 5px solid #555;
  border-bottom: 0;
}

.tri.up {
  border-top: 0;
  border-bottom: 5px solid #555;
}

.gs .tri { border-width: 3px 3px 0; }
.gs .tri.up { border-width: 0 3px 3px; border-bottom-color: #bbb; }
.gs .tri.bar { box-shadow: 0 -2px 0 -1px #555; }

.arrange {
  width: 42px;
  margin-left: 6px;
  padding-top: 6px;
}

.arrange .big-label { margin-top: 3px; }
.arrange .caret { margin: 6px 0 0; }

.quick {
  width: 42px;
  margin-left: 2px;
  padding-top: 6px;
  color: #a5a8ad;
}

.quick .big-label { margin-top: 4px; }
.shape-stack { margin-left: 3px; }

.g-edit .stack { padding-left: 8px; }

/* voice overlay */
.voice {
  position: absolute;
  left: 1115px;
  top: 112px;
  width: 228px;
  height: 60px;
  background: #1c1e22;
  border-radius: 3px;
  box-shadow: 0 1px 3px rgba(0, 0, 0, .5);
  padding: 0 1px 1px;
  z-index: 5;
}

.voice-top {
  position: relative;
  height: 28px;
}

.voice-top > * { position: absolute; }
.v-min { left: 7px; top: 17px; width: 12px; height: 3px; background: #2f8ae6; }
.v-one { left: 35px; top: 12px; width: 12px; height: 8px; background: #c8c8c8; border-radius: 1px; }
.v-two { left: 63px; top: 8px; width: 12px; }
.v-two i { display: block; height: 5px; margin-bottom: 2px; background: #c8c8c8; border-radius: 1px; }
.v-grid { left: 90px; top: 7px; display: grid; grid-template-columns: repeat(3, 4px); gap: 1px; }
.v-grid i { height: 4px; background: #c8c8c8; }
.v-pip { left: 205px; top: 8px; }

.voice-bottom {
  height: 31px;
  background: #253039;
  color: #c3c8cc;
  font-family: "Open Sans", sans-serif;
  font-size: 12px;
  line-height: 30px;
  padding-left: 25px;
  border-radius: 0 0 2px 2px;
  letter-spacing: .2px;
}

/* work area */
.workspace {
  display: flex;
  height: 573px;
}

.left-pane {
  width: 218px;
  flex: none;
  background: #cbced5;
  border-right: 1px solid #9a9da3;
  padding: 4px 5px 0 0;
}

.pane-tabs {
  position: relative;
  display: flex;
  height: 22px;
  background: #b7bbc3;
  border-bottom: 1px solid #999da5;
  color: #444;
  font-size: 12.500px;
}

.pane-tab {
  width: 63px;
  text-align: center;
  line-height: 21px;
  border-right: 1px solid #8f939b;
}

.pane-tab.active {
  background: #cbced5;
  height: 22px;
}

.pane-x {
  position: absolute;
  right: 5px;
  top: 6px;
}

.pane-body {
  display: flex;
  height: 547px;
  background: linear-gradient(#c6c9d0, #bfc1c6);
}

.thumbs {
  flex: 1;
  height: 547px;
  overflow: hidden;
  padding-top: 7px;
  display: flex;
  flex-direction: column;
  gap: 13px;
}

.t-row {
  position: relative;
  display: flex;
  flex: none;
  height: 94px;
}

.t-row.sel::before {
  content: "";
  position: absolute;
  left: 3px;
  top: -4px;
  width: 190px;
  height: 102px;
  background: linear-gradient(#fde7a6, #fbcf6a 50%, #fdeca8);
  border: 1px solid #d9b45a;
  border-radius: 3px;
}

.t-num {
  position: relative;
  width: 24px;
  flex: none;
  font-family: "Liberation Sans", sans-serif;
  font-weight: 700;
  font-size: 13px;
  color: #444;
  padding: 3px 0 0 10px;
}

.t-num.n2 {
  padding-left: 6px;
}

.thumb {
  position: relative;
  width: 165px;
  height: 94px;
  flex: none;
  box-shadow: 0 1px 4px rgba(60, 60, 70, .5);
  overflow: hidden;
}

.th7 {
  display: flex;
  background: #ffff99;
  border: 1px solid #eee;
}

.th7-left {
  width: 61px;
  flex: none;
  background: #08787a;
  color: #e6f5f5;
  font-family: "Liberation Sans", sans-serif;
  font-size: 8px;
  line-height: 8.500px;
  padding: 9px 0 0 10px;
  border-right: 1px solid #111;
}

.th7-right {
  flex: 1;
  display: flex;
  flex-direction: column;
}

.th7-right p {
  margin: 0;
  padding: 6px 2px 0 2px;
  font-size: 3.600px;
  line-height: 5.200px;
  font-weight: 700;
  color: #222;
  border-bottom: 1px solid #333;
}

.th7-right .c1 { height: 28px; }
.th7-right .c2 { height: 31px; background: #fff; }
.th7-right .c3 { flex: 1; border-bottom: 0; }

.th8 {
  background: #c9c8c8;
  border: 1px solid #fff;
}

.flow {
  position: absolute;
  left: 37px;
  top: 3px;
  width: 39px;
  height: 88px;
  background: #fff;
  display: flex;
  flex-direction: column;
  align-items: center;
  gap: 4px;
  padding-top: 3px;
}

.flow i {
  width: 12px;
  height: 4px;
  border: 1px solid #ccc;
}

.flow i.pink {
  border: 0;
  height: 2px;
  background: #f0a0e0;
}

.flow i.wide {
  width: 26px;
  height: 10px;
}

.mini-slide {
  position: absolute;
  left: 118px;
  top: 11px;
  width: 34px;
  height: 70px;
  background: #fff;
  border-right: 2px solid #111;
  border-bottom: 2px solid #111;
}

.mini-head {
  height: 7px;
  background: #1a10b4;
}

.mini-body {
  position: relative;
  margin: 4px 2px 0 1px;
  height: 55px;
  padding-top: 17px;
  border: 1px solid #bbb;
  border-top: 0;
  text-align: center;
  font-family: "Liberation Sans", sans-serif;
  font-size: 4px;
  line-height: 5px;
  color: #333;
}

.bulb {
  position: absolute;
  left: 13px;
  top: 11px;
  width: 4px;
  height: 4px;
  background: #cfd060;
  border-radius: 50%;
}

.th-table {
  background: #1a10b4;
  border: 1px solid #ffffc0;
  padding: 4px 5px 5px 5px;
}

.th-inner {
  display: flex;
  height: 100%;
  background: #c9c8c8;
}

.th-side {
  width: 45px;
  flex: none;
  padding: 4px 0 0 4px;
}

.th-icons {
  height: 9px;
}

.warn {
  display: block;
  width: 0;
  height: 0;
  margin-left: 1px;
  border: 3.500px solid transparent;
  border-top: 0;
  border-bottom: 6px solid #8a8a3a;
}

.dots {
  position: absolute;
  left: 141px;
  top: 7px;
  display: flex;
}

.dots i {
  width: 5px;
  height: 5px;
  border-radius: 50%;
  border: 1px solid #777;
  background: #eee;
}

.th-title {
  font-family: "Liberation Sans", sans-serif;
  font-size: 8px;
  line-height: 8px;
  color: #444;
  margin-top: 1px;
  white-space: nowrap;
}

.th-prog {
  width: 23px;
  height: 3px;
  margin-top: 14px;
  background: linear-gradient(90deg, #2a2ab0 35%, #ddd 35%);
  position: relative;
}

.th-prog::after {
  content: "";
  position: absolute;
  left: 21px;
  top: 2px;
  width: 4px;
  height: 4px;
  background: #e8e8e8;
  border-radius: 1px;
}

.mini-table {
  flex: 1;
  display: flex;
  margin-top: 13px;
  gap: 1px;
  background: #222;
  padding: 1px 2px 0 1px;
}

.mc {
  display: flex;
  flex-direction: column;
  background: #fff;
  flex: none;
}

.mc b {
  display: block;
  height: 10px;
  background: #ffff99;
  border-bottom: 1px solid #111;
}

.mc span {
  display: block;
  margin: auto 2px;
  background: repeating-linear-gradient(#8a8a8a 0 1px, transparent 1px 2.500px);
}

.w1 { width: 5px; }
.w2 { width: 21px; }
.w3 { width: 29px; }
.w4 { width: 12px; }
.w5 { width: 35px; }
.one { height: 1px; }
.short { height: 7px; }
.mid { height: 16px; }
.long { height: 45px; }
.full { height: 58px; }

.sb {
  display: flex;
  flex-direction: column;
  align-items: center;
  flex: none;
  width: 16px;
  background: #dfe2e9;
}

.thumbs-sb {
  position: relative;
  height: 547px;
  padding: 6px 0 8px;
  justify-content: space-between;
}

.sb-thumb {
  position: absolute;
  left: 0;
  width: 16px;
  background: linear-gradient(90deg, #f3f4f7, #dfe2e8);
  border: 1px solid #a0a3aa;
  border-radius: 2px;
  display: flex;
  align-items: center;
  justify-content: center;
}

.tall {
  top: 273px;
  height: 128px;
}

.grip {
  width: 8px;
  height: 7px;
  background: repeating-linear-gradient(#666 0 1px, transparent 1px 2px);
}

.right-side {
  flex: 1;
  display: flex;
  flex-direction: column;
  min-width: 0;
}

.canvas-row {
  display: flex;
  height: 536px;
  background: linear-gradient(#ced1d9, #bfc1c4);
}

.canvas {
  flex: 1;
  min-width: 0;
  padding-top: 8px;
}

.ruler-h {
  display: flex;
  width: 759px;
  height: 15px;
  margin-left: 200px;
  overflow: hidden;
  border: 1px solid #8d9096;
  background:
    repeating-linear-gradient(90deg, transparent 0 18px, #777 18px 19px, transparent 19px 38px) 0 50% / 100% 5px no-repeat,
    repeating-linear-gradient(90deg, transparent 0 3.750px, #777 3.750px 4.750px) 0 50% / 100% 2px no-repeat,
    #fff;
}

.ruler-h span {
  flex: none;
  width: 38px;
  margin-left: 0;
  text-align: center;
  font-size: 12px;
  line-height: 13px;
  color: #555;
  background: linear-gradient(90deg, transparent 13px, #fff 13px 25px, transparent 25px);
}

.ruler-h span:first-child {
  margin-left: -20px;
}

.stage {
  display: flex;
  margin-top: 46px;
}

.ruler-v {
  display: flex;
  flex-direction: column;
  flex: none;
  width: 15px;
  height: 428px;
  margin: 1px 0 0 4px;
  padding-top: 5px;
  overflow: hidden;
  border: 1px solid #a0a3aa;
  background:
    repeating-linear-gradient(transparent 0 4px, #777 4px 5px, transparent 5px 38px) 50% 0 / 5px 100% no-repeat,
    repeating-linear-gradient(transparent 0 3.750px, #777 3.750px 4.750px) 50% 0 / 2px 100% no-repeat,
    #fff;
}

.ruler-v span {
  flex: none;
  height: 38px;
  text-align: center;
  font-size: 12px;
  line-height: 38px;
  color: #555;
  transform: rotate(-90deg);
}

.slide {
  display: flex;
  width: 761px;
  height: 429px;
  margin-left: 181px;
  background: #fff;
  box-shadow: 1px 2px 7px rgba(70, 70, 80, .6);
}

.slide-left {
  width: 282px;
  flex: none;
  padding-top: 8px;
}

.teal {
  height: 435px;
  background: #08787a;
  padding: 33px 0 0 44px;
}

.teal h1 {
  margin: 0;
  font-family: "Liberation Sans", sans-serif;
  font-weight: 400;
  font-size: 35.500px;
  line-height: 36px;
  color: #fff;
}

.slide-right {
  flex: 1;
  display: flex;
  flex-direction: column;
  border-right: 2px solid #555;
  border-bottom: 2px solid #444;
  border-left: 1px solid #444;
}

.cell {
  padding: 0 8px 0 7px;
  font-family: Inter, "Open Sans", sans-serif;
  font-weight: 700;
  font-size: 16.600px;
  line-height: 23.500px;
  color: #111;
  border-bottom: 1px solid #444;
}

.yellow { background: #ffff99; }
.white { background: #fff; }
.c-a { height: 125px; padding-top: 28px; }
.c-b { height: 142px; padding-top: 24px; }
.c-c { flex: 1; padding-top: 22px; border-bottom: 0; }

.main-sb {
  position: relative;
  margin-top: 33px;
  padding-top: 6px;
  height: 503px;
  background: #dfe2e9;
}

.main-sb .short {
  top: 198px;
  height: 30px;
}

.main-sb > .tri:nth-of-type(2) {
  margin-top: 432px;
}

.main-sb .grip {
  width: 9px;
}

.pager {
  display: flex;
  flex-direction: column;
  gap: 5px;
  margin-top: 6px;
  padding-top: 4px;
  width: 16px;
  align-items: center;
  border-top: 1px solid #c9ccd3;
}

.notes-row {
  display: flex;
  height: 37px;
  padding-top: 5px;
  background: #dfe2e9;
}

.notes {
  flex: 1;
  background: #fff;
  border-top: 1px solid #a0a3aa;
  border-left: 1px solid #a0a3aa;
  padding-left: 9px;
  font-family: "Open Sans", sans-serif;
  font-size: 15px;
  line-height: 30px;
  color: #222;
}

.notes-sb {
  justify-content: space-around;
  padding: 4px 0;
  height: 32px;
}

/* status bar */
.statusbar {
  display: flex;
  align-items: center;
  height: 21px;
  background: linear-gradient(#e8eaee, #c6cad1);
  border-top: 1px solid #a9adb4;
  color: #555;
  font-size: 11.500px;
}

.st {
  display: flex;
  align-items: center;
  height: 100%;
  padding-left: 8px;
  border-right: 1px solid #a9adb4;
  white-space: nowrap;
}

.st1 { width: 81px; }
.st2 { width: 95px; padding-left: 9px; }
.st3 { width: 35px; }

.st-right {
  margin-left: auto;
  display: flex;
  align-items: center;
  height: 100%;
  padding-left: 4px;
  border-left: 1px solid #999;
}

.view-on {
  display: flex;
  align-items: center;
  justify-content: center;
  width: 18px;
  height: 19px;
  background: linear-gradient(#fde8a8, #fbcf68);
  border: 1px solid #d9a83a;
  border-radius: 2px;
}

.vw1 { margin-left: 5px; }
.vw2 { margin-left: 6px; }
.vw3 { margin-left: 6px; }
.zoom-pct { margin-left: 13px; width: 29px; }

.round {
  width: 16px;
  height: 16px;
  border-radius: 50%;
  background: linear-gradient(#fbfbfc, #d5d8de);
  border: 1px solid #8f9299;
  font-family: "Liberation Sans", sans-serif;
  font-weight: 700;
  font-size: 14px;
  line-height: 13px;
  text-align: center;
  color: #555;
  flex: none;
}

.slider {
  position: relative;
  width: 100px;
  height: 1px;
  background: #a9adb4;
}

.knob {
  position: absolute;
  left: 16px;
  top: -7px;
  width: 9px;
  height: 14px;
  background: #f6f7f9;
  border: 1px solid #777;
  border-radius: 1px 1px 4px 4px;
}

.mid-tick {
  position: absolute;
  left: 50px;
  top: -3px;
  width: 1px;
  height: 7px;
  background: #a9adb4;
}

.fit { margin: 0 5px 0 8px; flex: none; }
```
